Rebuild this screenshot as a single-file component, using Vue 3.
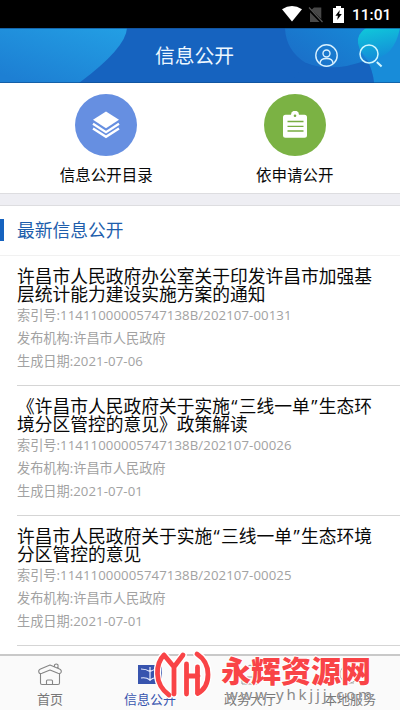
<script setup>
const actions = [
  { label: '信息公开目录', kind: 'layers' },
  { label: '依申请公开', kind: 'clipboard' },
]
const articles = [
  { lines: [['许昌市人民政府办公室关于印发许昌市加强基'], ['层统计能力建设实施方案的通知']], no: '11411000005747138B/202107-00131', date: '2021-07-06' },
  { lines: [['《许昌市人民政府关于实施', '“', '三线一单', '”', '生态环'], ['境分区管控的意见》政策解读']], no: '11411000005747138B/202107-00026', date: '2021-07-01' },
  { lines: [['许昌市人民政府关于实施', '“', '三线一单', '”', '生态环境'], ['分区管控的意见']], no: '11411000005747138B/202107-00025', date: '2021-07-01' },
]
const tabs = [
  { label: '首页', kind: 'home' },
  { label: '信息公开', kind: 'book', active: true },
  { label: '政务大厅', kind: 'hall' },
  { label: '本地服务', kind: 'service' },
]
</script>

<template>
  <div class="screen">
    <div class="status">
      <svg class="wifi" width="20" height="16" viewBox="0 0 20 16"><path d="M0 3.2Q10-3 20 3.2L10 15.6Z" fill="#fff" /></svg>
      <svg class="sim" width="16" height="17" viewBox="0 0 16 17"><path d="M6 1.500h7.300V13L3.500 3.800ZM2 6.200 11.500 16H2Z" fill="#484848" /><path d="M1 1.500 14.500 16" stroke="#555" stroke-width="1.200" /></svg>
      <svg class="battery" width="11" height="17" viewBox="0 0 11 17"><path d="M0 2h3V0h5v2h3v15H0Z" fill="#fff" /><path d="M6.800 4 2.400 9.800h2.500L4.200 14l4.600-6H6.200Z" fill="#000" /></svg>
      <span class="clock">11:01</span>
    </div>

    <header class="header">
      <svg class="header-art" width="400" height="55" viewBox="0 0 400 55">
        <defs>
          <linearGradient id="left" x1="1" y1="0" x2=".2" y2="1"><stop stop-color="#239fe4" /><stop offset="1" stop-color="#1d7fd3" /></linearGradient>
          <linearGradient id="right" x1="1" y1="0" x2="0" y2=".7"><stop stop-color="#168fda" /><stop offset="1" stop-color="#1b6cc7" /></linearGradient>
          <linearGradient id="cyan" x1=".3" y1="0" x2=".6" y2="1"><stop stop-color="#10c5da" /><stop offset="1" stop-color="#148bd8" /></linearGradient>
        </defs>
        <path d="M0 0H127Q126 20 79 55H0Z" fill="url(#left)" />
        <path d="M285 0Q286 23 306 35Q321 41 345 39Q369 38 374 55H400V0Z" fill="url(#right)" />
        <path d="M366 0Q357 6 358 15Q359 23 367 32Q373 43 374 55H400V0Z" fill="#188cd9" />
        <path d="M366 0Q357 6 358 15Q360 27 371 31Q394 30 400 0Z" fill="url(#cyan)" />
        <path d="M306 35Q330 46 367 32Q373 43 374 55H290Z" fill="#1663bf" />
        <path d="M0 .5H400M0 54.5H400" stroke="#104f91" stroke-opacity=".65" />
      </svg>
      <h1>信息公开</h1>
      <svg class="user" width="24" height="24" viewBox="0 0 24 24"><g fill="none" stroke="#d8f1ff" stroke-width="1.400"><circle cx="11.500" cy="11.500" r="10.700" /><circle cx="11.500" cy="9.500" r="3.500" /><path d="M5 19.500q0-5 6.500-5t6.500 5" /></g></svg>
      <svg class="search" width="24" height="24" viewBox="0 0 24 24"><g fill="none" stroke="#d0f6ff" stroke-width="1.500"><circle cx="10" cy="10" r="9" /><path d="m17.800 18 4.800 4.500" stroke-width="2" /></g></svg>
    </header>

    <nav class="actions">
      <div v-for="a in actions" :key="a.kind" class="action">
        <div class="disc" :class="a.kind">
          <svg v-if="a.kind === 'layers'" width="28" height="28" viewBox="0 0 28 28"><path d="M14 .5 27 8.800 14 17.200 1 8.800Z" fill="#fff" /><path d="m1 12.800 13 8.300 13-8.300M1 17.500l13 8.300 13-8.300" fill="none" stroke="#fff" stroke-width="2.300" /></svg>
          <svg v-else width="28" height="28" viewBox="0 0 28 28"><path d="M4.500 3.800H10a4 4 0 0 1 8 0h5.500q2.500 0 2.500 2.500v18q0 2.500-2.500 2.500h-19Q2 26.800 2 24.300v-18q0-2.500 2.500-2.500Z" fill="#fff" /><circle cx="14" cy="4.800" r="1.300" fill="#78ad42" /><path d="M6.500 10.500h16M6.500 15.300h16M6.500 20h16" stroke="#78ad42" stroke-width="1.300" /></svg>
        </div>
        <span>{{ a.label }}</span>
      </div>
    </nav>

    <div class="band"></div>
    <h2 class="section">最新信息公开</h2>

    <main class="list">
      <article v-for="item in articles" :key="item.no">
        <h3><span v-for="(line, i) in item.lines" :key="i" class="line"><span v-for="(part, j) in line" :key="j" :class="{ quote: part === '“' || part === '”' }">{{ part }}</span></span></h3>
        <p>索引号:<span class="num">{{ item.no }}</span></p>
        <p>发布机构:许昌市人民政府</p>
        <p>生成日期:<span class="num">{{ item.date }}</span></p>
      </article>
    </main>

    <footer class="tabs">
      <div v-for="t in tabs" :key="t.kind" class="tab" :class="{ active: t.active }">
        <svg width="26" height="24" viewBox="0 0 26 24">
          <g v-if="t.kind === 'home'" fill="none" stroke="#858585" stroke-width="1.100" stroke-linejoin="round"><path d="M2 9.500Q1 7 3.500 6L13 2l9.500 4q2.500 1 1.500 3.500-.8 1.500-3 .8L13 7 5 10.300q-2.500.8-3-.8ZM3.500 10.500V20q0 1.500 1.500 1.500h16q1.500 0 1.500-1.500v-9.500M9.500 21.500V18q0-1 1-1h4q1 0 1 1v3.500M17.500 3.300V1.800q1.800-1.600 3.500 0V5" /></g>
          <g v-else-if="t.kind === 'book'"><path d="M1 2h24v19H1Z" fill="#3854ae" /><path d="M4 6q5 0 9 2.500Q17 6 22 6M13 4v14M4 15q5-1 9 2 4-3 9-2" fill="none" stroke="#e8edff" stroke-width="1.200" /></g>
          <g v-else-if="t.kind === 'hall'" fill="none" stroke="#999"><path d="M3 9 13 2l10 7M5 9v12h16V9M10 21v-7h6v7" /></g>
          <g v-else fill="none" stroke="#aaa"><circle cx="12" cy="11" r="9" /><path d="M8 11h8M12 7v13h5" /></g>
        </svg>
        <span>{{ t.label }}</span>
      </div>
    </footer>

    <div class="watermark">
      <svg width="58" height="52" viewBox="0 0 58 52">
        <g fill="none" stroke-linecap="round" stroke-linejoin="round">
          <g stroke="#fff" stroke-width="7.500"><path d="M10 6Q3 13 3.500 25 4 38 15 46M10 6l10 12L29 6M20 18v27M32.500 15v30M33 27h11M43.500 18v26M43 5Q54 12 54 25.500T43.500 44.500" /></g>
          <g stroke="#f94447" stroke-width="4.800"><path d="M10 6Q3 13 3.500 25 4 38 15 46M10 6l10 12L29 6M20 18v27M32.500 15v30M33 27h11M43.500 18v26M43 5Q54 12 54 25.500T43.500 44.500" /></g>
        </g>
      </svg>
      <div class="brand"><strong>永辉资源网</strong><small>www.yhkjjj.com</small></div>
    </div>
  </div>
</template>

<style>
body { margin: 0; }
</style>
<style scoped>
* { box-sizing: border-box; }
.screen { position: relative; width: 400px; height: 710px; overflow: hidden; background: #fff; color: #080808; font-family: "Open Sans", "Noto Sans CJK SC", sans-serif; display: flex; flex-direction: column; }
h1, h2, h3, p { margin: 0; font-weight: 400; }
svg { display: block; flex: none; }
.status { height: 28px; flex: none; background: #000; color: #fff; display: flex; align-items: center; padding-left: 282px; }
.sim { margin-left: 6px; }
.battery { margin-left: 9px; }
.clock { margin-left: 8px; padding-top: 1px; font: 500 15.500px/28px Roboto, sans-serif; }
.header { position: relative; height: 55px; flex: none; background: #1663bf; display: flex; align-items: center; padding-left: 155px; color: #eef8ff; }
.header-art { position: absolute; inset: 0; }
h1 { position: relative; font-size: 19.8px; line-height: 54px; width: 160px; }
.user, .search { position: relative; }
.search { margin-left: 20px; }
.actions { height: 110px; flex: none; display: flex; padding: 11px 11px 0 12px; }
.action { flex: 1; display: flex; flex-direction: column; align-items: center; font-size: 15.5px; line-height: 23px; }
.disc { width: 62px; height: 62px; border-radius: 50%; display: grid; place-items: center; margin-bottom: 8px; }
.disc.layers { background: #668fe1; }
.disc.clipboard { background: #7bb244; }
.band { height: 13px; flex: none; background: #eeeef3; border-top: 1px solid #dddde0; border-bottom: 1px solid #dddde0; }
.section { height: 50px; flex: none; display: flex; align-items: center; padding-bottom: 2px; border-bottom: 1px solid #f1f1f1; color: #1e5eac; font-size: 17.75px; line-height: 24px; }
.section::before { content: ""; width: 4px; height: 22px; margin-right: 13px; background: #1663bf; }
.list { height: 398px; flex: none; padding-left: 17px; }
article { height: 130px; padding-top: 11px; border-bottom: 1px solid #d5d5d5; }
h3 { font-size: 17.75px; margin-bottom: 1px; }
.line { display: block; height: 18px; line-height: 18px; white-space: nowrap; }
.quote { padding: 0 1.3px; }
article p { height: 23px; font-size: 13.2px; line-height: 23px; color: #a2a2a2; white-space: nowrap; }
.num { letter-spacing: .09px; }
.tabs { height: 56px; flex: none; border-top: 2px solid #c9c9c9; background: #fafafa; display: flex; }
.tab { flex: 1; display: flex; flex-direction: column; align-items: center; padding-top: 7px; font-size: 13px; line-height: 18px; color: #777; }
.tab span { margin-top: 3px; }
.tab.active { color: #3854ae; }
.watermark { position: absolute; left: 154px; top: 649px; display: flex; }
.brand { display: flex; flex-direction: column; padding: 4px 0 0 9px; }
.brand strong { font: 900 30px/32px "Noto Sans CJK SC", sans-serif; color: #f94447; -webkit-text-stroke: 2px #fff; paint-order: stroke fill; white-space: nowrap; }
.brand small { font: 15px/18px "Noto Sans", sans-serif; letter-spacing: 2.8px; color: #888; margin-left: 5px; text-shadow: 0 0 1px #fff; }
</style>
